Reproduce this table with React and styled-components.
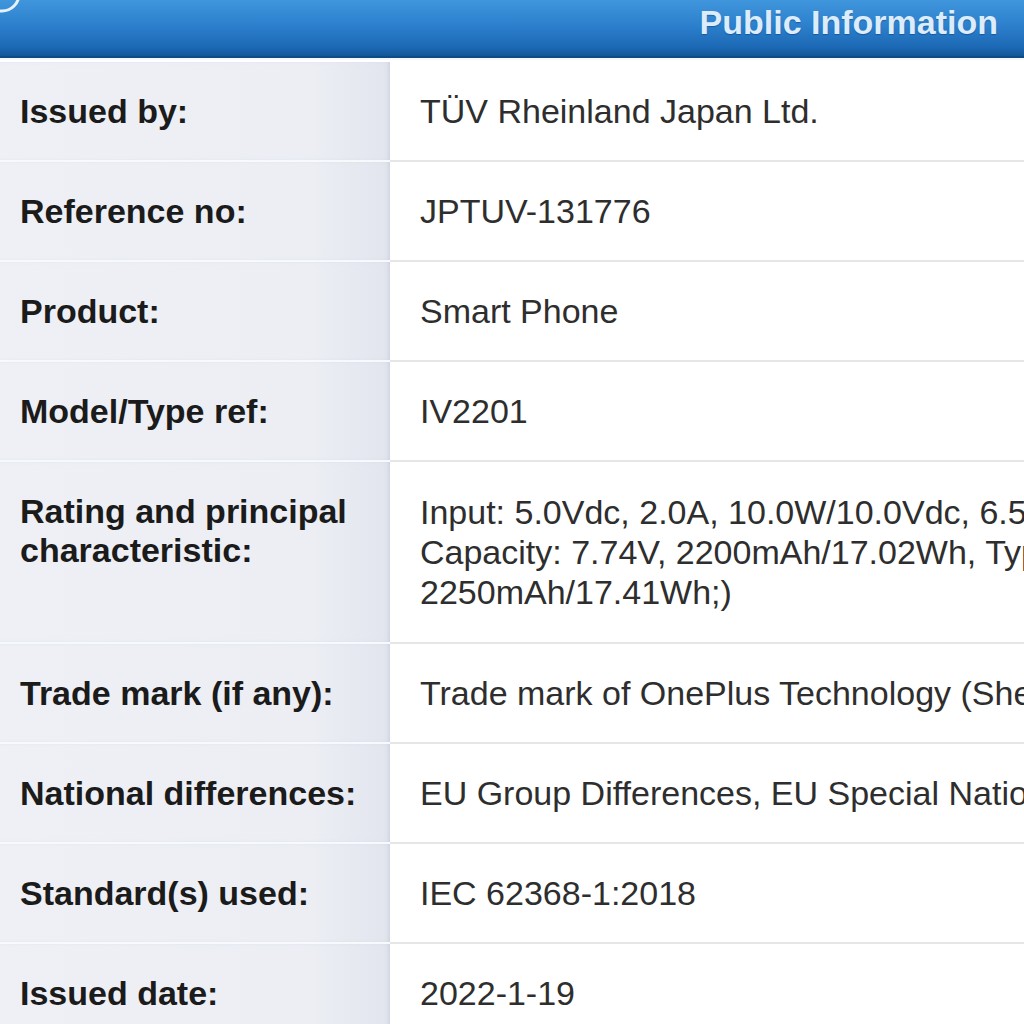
import styled, { createGlobalStyle } from "styled-components";

const GlobalStyle = createGlobalStyle`
  html, body {
    margin: 0;
    padding: 0;
    background: #ffffff;
  }
  body {
    font-family: "Liberation Sans", Arial, sans-serif;
  }
`;

const Page = styled.div`
  width: 1024px;
  height: 1024px;
  overflow: hidden;
  position: relative;
  background: #ffffff;
`;

const Header = styled.div`
  height: 58px;
  display: flex;
  align-items: flex-start;
  justify-content: flex-end;
  padding-right: 26px;
  box-sizing: border-box;
  padding-top: 3px;
  background: linear-gradient(to bottom, #4096dc 0%, #2c80cd 45%, #1c68b4 85%, #125697 100%);
  border-bottom: 2px solid #0e4a86;
  box-shadow: 0 2px 0 #f4f7fb;
`;

const HeaderTitle = styled.h1`
  margin: 0;
  font-size: 34px;
  line-height: 38px;
  font-weight: 700;
  color: #dcecfa;
  text-shadow: 0 1px 1px rgba(10, 60, 120, 0.5);
`;

const Logo = styled.svg`
  position: absolute;
  left: -14px;
  top: -18px;
`;

const Table = styled.div`
  margin-top: 4px;
  display: flex;
  flex-direction: column;
`;

const Row = styled.div`
  display: grid;
  grid-template-columns: 390px 1fr;
  min-height: 100px;
`;

const LabelCell = styled.div`
  display: flex;
  align-items: ${(p) => (p.$top ? "flex-start" : "center")};
  padding: ${(p) => (p.$top ? "30px 0 30px 20px" : "0 0 0 20px")};
  background: linear-gradient(to right, #eef0f5 0%, #eceef4 80%, #e2e5ee 100%);
  border-bottom: 2px solid #f8f9fc;
  box-shadow: inset -3px 0 4px -2px rgba(150, 160, 190, 0.35);
  font-size: 34px;
  line-height: 39px;
  font-weight: 700;
  color: #1b1b1b;
`;

const ValueCell = styled.div`
  display: flex;
  align-items: ${(p) => (p.$top ? "flex-start" : "center")};
  padding: ${(p) => (p.$top ? "30px 0 30px 30px" : "0 0 0 30px")};
  background: #ffffff;
  border-bottom: 2px solid #e6e6e6;
  font-size: 34px;
  line-height: 40px;
  color: #2e2e2e;
  white-space: nowrap;
  overflow: hidden;
`;

const rows = [
  { label: "Issued by:", value: "TÜV Rheinland Japan Ltd." },
  { label: "Reference no:", value: "JPTUV-131776" },
  { label: "Product:", value: "Smart Phone" },
  { label: "Model/Type ref:", value: "IV2201" },
  {
    label: ["Rating and principal", "characteristic:"],
    value: [
      "Input: 5.0Vdc, 2.0A, 10.0W/10.0Vdc, 6.5A, 65W",
      "Capacity: 7.74V, 2200mAh/17.02Wh, Typ. 7.74V,",
      "2250mAh/17.41Wh;)",
    ],
  },
  { label: "Trade mark (if any):", value: "Trade mark of OnePlus Technology (Shenzhen) Co., Ltd." },
  { label: "National differences:", value: "EU Group Differences, EU Special National Conditions" },
  { label: "Standard(s) used:", value: "IEC 62368-1:2018" },
  { label: "Issued date:", value: "2022-1-19" },
];

const lines = (text) =>
  Array.isArray(text) ? text.map((t, i) => <div key={i}>{t}</div>) : text;

export default function App() {
  return (
    <>
      <GlobalStyle />
      <Page>
        <Header>
          <HeaderTitle>Public Information</HeaderTitle>
        </Header>
        <Logo width="44" height="36" viewBox="0 0 44 36">
          <circle cx="16" cy="12" r="17" fill="none" stroke="#e8f2fb" strokeWidth="3" />
        </Logo>
        <Table>
          {rows.map((r, i) => {
            const multi = Array.isArray(r.value);
            return (
              <Row key={i}>
                <LabelCell $top={multi}>
                  <div>{lines(r.label)}</div>
                </LabelCell>
                <ValueCell $top={multi}>
                  <div>{lines(r.value)}</div>
                </ValueCell>
              </Row>
            );
          })}
        </Table>
      </Page>
    </>
  );
}
